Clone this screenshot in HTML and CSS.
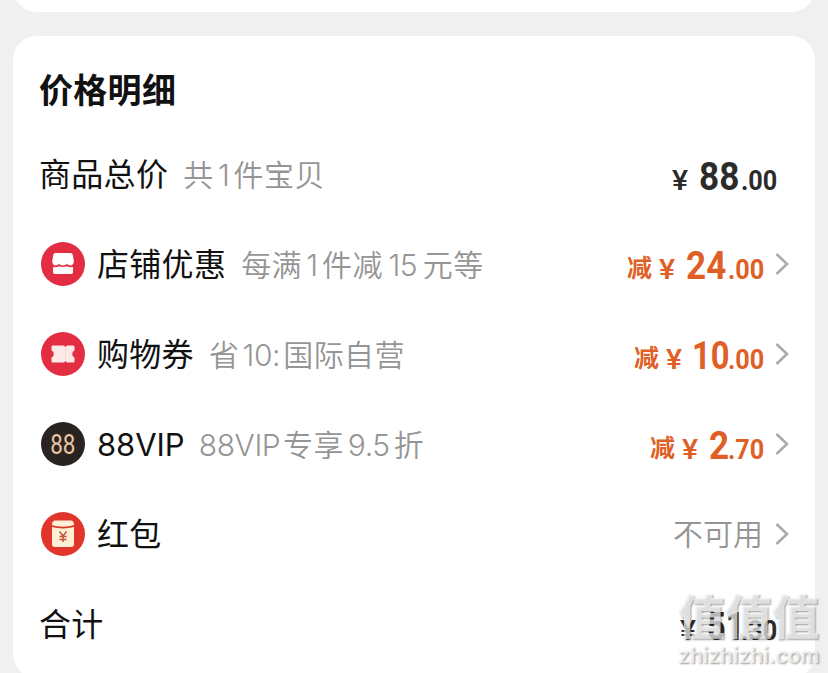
FILE: index.html
```
<!DOCTYPE html>
<html lang="zh-CN">

<head>
    <meta charset="UTF-8">
    <title>价格明细</title>
    <link rel="stylesheet" href="styles.css">
</head>

<body>
    <div class="card card-prev"></div>

    <div class="card detail">
        <h1>价格明细</h1>

        <div class="row">
            <span class="label">商品总价</span>
            <span class="sub">共<span class="n n-one">1</span>件宝贝</span>
            <div class="amount dark">
                <span class="yen">¥</span><span class="int">88</span><span class="dec">.00</span>
            </div>
        </div>

        <div class="row has-arrow">
            <svg class="icon" viewBox="0 0 44 44">
                <circle cx="22" cy="22" r="22" fill="#e32d42"/>
                <path d="M14.500 11h15c1.500 0 2 .8 2.300 2l1 5.500c.3 3-1.300 5-3.300 5-1.500 0-2.500-.5-3.600-1.400-1 .9-2.200 1.400-3.900 1.400s-2.900-.5-3.900-1.400c-1.100.9-2.200 1.400-3.600 1.400-2 0-3.500-2-3.200-5l1-5.500c.2-1.200.7-2 2.200-2z" fill="#fff"/>
                <path d="M12 25c2 .4 4.300.2 6.200-.7 2.300.9 5.300.9 7.600 0 1.900.9 4.200 1.100 6.200.7v5c0 1.300-.7 2-2 2H14c-1.300 0-2-.7-2-2z" fill="#fff"/>
            </svg>
            <span class="label">店铺优惠</span>
            <span class="sub">每满<span class="n n-one">1</span>件减<span class="n n-fifteen">15</span>元等</span>
            <div class="amount">
                <span class="cut">减</span><span class="yen">¥</span><span class="int">24</span><span class="dec">.00</span>
            </div>
            <svg class="arrow" viewBox="0 0 14 24"><path d="M1.500 2l10.500 10L1.500 22"/></svg>
        </div>

        <div class="row has-arrow">
            <svg class="icon" viewBox="0 0 44 44">
                <circle cx="22" cy="22" r="22" fill="#e32d42"/>
                <path d="M12 13.500h11l1.500 1.500 1.500-1.500h6c1 0 1.500.5 1.500 1.500v3.500c-3 1-3 6 0 7V29c0 1-.5 1.500-1.500 1.500h-6L24.500 29 23 30.500H12c-1 0-1.500-.5-1.500-1.500v-3.500c3-1 3-6 0-7V15c0-1 .5-1.500 1.500-1.500z" fill="#fdeae6"/>
                <path d="M24.500 17v11" stroke="#f8c8c4" stroke-width="1" stroke-dasharray="2 1.500"/>
            </svg>
            <span class="label">购物券</span>
            <span class="sub">省<span class="n n-ten">10:</span>国际自营</span>
            <div class="amount">
                <span class="cut">减</span><span class="yen yen-ten">¥</span><span class="int int-ten">10</span><span class="dec">.00</span>
            </div>
            <svg class="arrow" viewBox="0 0 14 24"><path d="M1.500 2l10.500 10L1.500 22"/></svg>
        </div>

        <div class="row has-arrow">
            <div class="icon icon-vip"><span>88</span></div>
            <span class="label label-vip">88VIP</span>
            <span class="sub sub-vip"><span class="n n-vip">88VIP</span>专享<span class="n n-rate">9.5</span>折</span>
            <div class="amount">
                <span class="cut">减</span><span class="yen">¥</span><span class="int int-single">2</span><span class="dec">.70</span>
            </div>
            <svg class="arrow" viewBox="0 0 14 24"><path d="M1.500 2l10.500 10L1.500 22"/></svg>
        </div>

        <div class="row has-arrow">
            <svg class="icon" viewBox="0 0 44 44">
                <circle cx="22" cy="22" r="22" fill="#e1342b"/>
                <path d="M11 13c0-3 1-4.500 3.500-4.500h15c2.500 0 3.500 1.500 3.500 4.500-6 2.200-16 2.200-22 0z" fill="#fff0d5"/>
                <path d="M11 14.800c6 2.200 16 2.200 22 0V32c0 2-1 3-3 3H14c-2 0-3-1-3-3z" fill="#fff0d5"/>
                <path d="M18.500 19.500l3.500 4.500 3.500-4.500M22 24v6M18.500 24.500h7M18.500 27.500h7" fill="none" stroke="#c9543c" stroke-width="1.500"/>
            </svg>
            <span class="label">红包</span>
            <span class="unavailable">不可用</span>
            <svg class="arrow" viewBox="0 0 14 24"><path d="M1.500 2l10.500 10L1.500 22"/></svg>
        </div>

        <div class="row">
            <span class="label">合计</span>
            <div class="amount dark">
                <span class="yen">¥</span><span class="int int-total">51</span><span class="dec">.30</span>
            </div>
        </div>
    </div>

    <div class="watermark">
        <div class="wm-name">值值值</div>
        <div class="wm-site">zhizhizhi.com</div>
    </div>
</body>

</html>
```
FILE: styles.css
```
* {
    box-sizing: border-box;
}

body {
    display: flow-root;
    margin: 0;
    height: 673px;
    overflow: hidden;
    position: relative;
    background: #f0f0f0;
    font-family: Inter, "Noto Sans CJK SC", sans-serif;
    color: #111;
}

.card {
    margin: 0 13px;
    background: #fff;
}

/* only the bottom edge of the previous card shows */
.card-prev {
    height: 52px;
    margin-top: -40px;
    border-radius: 24px;
}

.detail {
    margin-top: 24px;
    height: 642px;
    padding: 31px 38px 0 26px;
    border-radius: 24px;
}

h1 {
    margin: 0;
    height: 48px;
    line-height: 48px;
    font-size: 34px;
    font-weight: 700;
    letter-spacing: .3px;
}

.row {
    display: flex;
    align-items: center;
    height: 90px;
}

h1 + .row {
    margin-top: 14px;
}

.has-arrow {
    margin-right: -12px;
}

.icon {
    flex: none;
    width: 44px;
    height: 44px;
    margin: 0 12px 0 2px;
}

.icon-vip {
    display: flex;
    align-items: center;
    justify-content: center;
    border-radius: 50%;
    background: #292421;
    color: #eac5a0;
    font-family: Roboto, sans-serif;
    font-size: 28px;
}

.icon-vip span {
    transform: scaleX(.8);
}

.label {
    padding-top: 1px;
    font-size: 32px;
    line-height: 48px;
    letter-spacing: .3px;
    white-space: nowrap;
}

.label-vip {
    width: 87px;
    font-size: 31px;
    letter-spacing: -.1px;
}

.sub {
    margin-left: 15px;
    padding-top: 2px;
    font-size: 30px;
    line-height: 46px;
    letter-spacing: .4px;
    white-space: nowrap;
    font-weight: 350;
    color: #959595;
}

.sub-vip {
    margin-left: 12px;
}

.n {
    display: inline-block;
    text-align: center;
    letter-spacing: -.4px;
}

.n-one {
    width: 20px;
}

.n-fifteen {
    width: 40px;
}

.n-ten {
    width: 44px;
}

.n-vip {
    width: 87px;
}

.n-rate {
    width: 50px;
}

.amount {
    display: flex;
    align-items: baseline;
    margin-left: auto;
    padding-top: 9px;
    font-family: Roboto, sans-serif;
    font-weight: 700;
    line-height: 46px;
    color: #df5f26;
}

.dark {
    color: #2b2b2b;
}

/* narrow digits, each part keeps its own slot */
.yen,
.int,
.dec {
    transform: scaleX(.9);
    transform-origin: left;
    white-space: nowrap;
}

.yen {
    width: 27px;
    font-size: 28px;
    font-weight: 500;
    transform: scaleX(1.08);
}

.yen-ten {
    width: 26px;
}

.int {
    width: 42px;
    font-size: 39px;
}

.int-ten {
    width: 36px;
    transform: scaleX(.84);
}

.int-single {
    width: 19px;
}

.int-total {
    width: 34px;
    transform: scaleX(.84);
}

.dec {
    width: 36px;
    font-size: 28px;
}

.cut {
    width: 32px;
    padding-bottom: 3px;
    font-family: "Noto Sans CJK SC", sans-serif;
    font-size: 25px;
    font-weight: 700;
    transform: translateY(-2px);
}

.has-arrow .amount {
    margin-right: 11px;
}

.unavailable {
    margin: 0 12px 0 auto;
    font-size: 30px;
    line-height: 46px;
    font-weight: 350;
    color: #959595;
}

.arrow {
    flex: none;
    width: 14px;
    height: 24px;
    fill: none;
    stroke: #aaa;
    stroke-width: 2.600;
}

.watermark {
    position: absolute;
    left: 678px;
    top: 591px;
    width: 150px;
    color: rgba(255, 255, 255, .7);
    text-shadow: 1px 1px 2px rgba(0, 0, 0, .4);
    white-space: nowrap;
}

.wm-name {
    height: 52px;
    line-height: 52px;
    font-size: 47px;
    font-weight: 900;
}

.wm-site {
    height: 26px;
    line-height: 26px;
    font-size: 21px;
    font-weight: 600;
}
```
